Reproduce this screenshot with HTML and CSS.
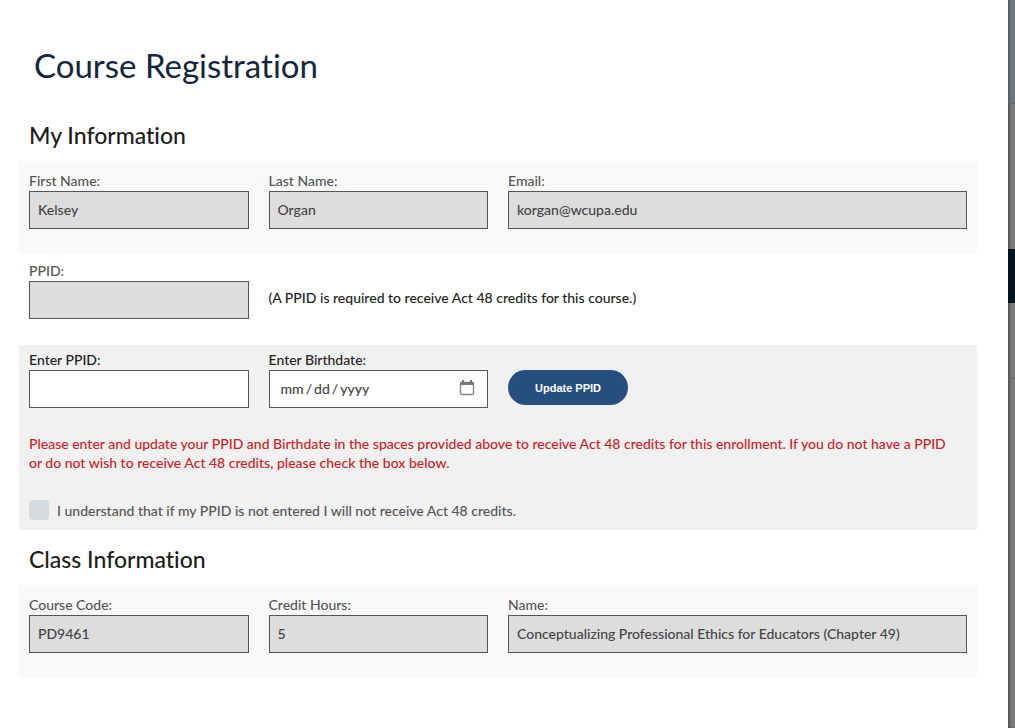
FILE: index.html
```html
<!DOCTYPE html>
<html lang="en">
<head>
    <meta charset="UTF-8">
    <meta name="viewport" content="width=device-width, initial-scale=1.0">
    <title>Course Registration</title>
    <link rel="stylesheet" href="styles.css">
</head>
<body>
    <main class="dialog">
        <h1>Course Registration</h1>
        <form id="registrationForm">
            <h2>My Information</h2>
            <div class="section shaded">
                <div class="field">
                    <label for="firstName">First Name:</label>
                    <input type="text" id="firstName" value="Kelsey" readonly>
                </div>
                <div class="field">
                    <label for="lastName">Last Name:</label>
                    <input type="text" id="lastName" value="Organ" readonly>
                </div>
                <div class="field wide">
                    <label for="email">Email:</label>
                    <input type="email" id="email" value="korgan@wcupa.edu" readonly>
                </div>
            </div>

            <div class="section plain">
                <div class="field">
                    <label for="ppid">PPID:</label>
                    <input type="text" id="ppid" readonly>
                </div>
                <p class="note">(A PPID is required to receive Act 48 credits for this course.)</p>
            </div>

            <div class="section update">
                <div class="field">
                    <label for="newPpid">Enter PPID:</label>
                    <input type="text" id="newPpid">
                </div>
                <div class="field">
                    <label for="birthdate">Enter Birthdate:</label>
                    <input type="date" id="birthdate">
                </div>
                <button type="button">Update PPID</button>
                <p class="warning">Please enter and update your PPID and Birthdate in the spaces provided above to receive Act 48 credits for this enrollment. If you do not have a PPID or do not wish to receive Act 48 credits, please check the box below.</p>
                <div class="agree">
                    <input type="checkbox" id="agree">
                    <label for="agree">I understand that if my PPID is not entered I will not receive Act 48 credits.</label>
                </div>
            </div>

            <h2>Class Information</h2>
            <div class="section shaded">
                <div class="field">
                    <label for="courseCode">Course Code:</label>
                    <input type="text" id="courseCode" value="PD9461" readonly>
                </div>
                <div class="field">
                    <label for="creditHours">Credit Hours:</label>
                    <input type="text" id="creditHours" value="5" readonly>
                </div>
                <div class="field wide">
                    <label for="courseName">Name:</label>
                    <input type="text" id="courseName" value="Conceptualizing Professional Ethics for Educators (Chapter 49)" readonly>
                </div>
            </div>
        </form>
    </main>
    <!-- dimmed page behind the dialog -->
    <div class="backdrop">
        <div class="backdrop-header"></div>
        <div class="backdrop-body"></div>
        <div class="backdrop-nav"></div>
        <div class="backdrop-body short"></div>
        <div class="backdrop-rest"></div>
    </div>
</body>
</html>
```
FILE: styles.css
```css
* {
    box-sizing: border-box;
}
body {
    display: flex;
    min-height: 100vh;
    margin: 0;
    background-color: #fff;
    color: #222;
    font-family: "Proxima Nova", Lato, sans-serif;
    font-size: 14px;
    font-weight: 500;
    font-variant-ligatures: none;
    line-height: 19px;
}
.dialog {
    flex: 1;
    padding: 45px 31px 40px 19px;
}
h1 {
    margin: 0 15px 35px;
    color: #14263b;
    font-size: 33px;
    font-weight: 400;
    line-height: 40px;
}
h2 {
    margin: 0;
    padding: 0 10px 11px;
    color: #1c1c1c;
    font-size: 23px;
    font-weight: 500;
    line-height: 30px;
}
.section {
    display: grid;
    grid-template-columns: repeat(4, 1fr);
    column-gap: 20px;
    padding: 10px 10px 25px;
}
.shaded {
    background-color: #f9f9f9;
}
.plain {
    padding-top: 7px;
    padding-bottom: 26px;
}
.update {
    margin-bottom: 14px;
    padding-top: 5px;
    padding-bottom: 10px;
    background-color: #f1f1f1;
}
.wide {
    grid-column: span 2;
}
label {
    color: #555;
}
.field label {
    display: block;
    line-height: 20px;
}
.update .field label {
    color: #222;
}
input[type="text"],
input[type="email"],
input[type="date"] {
    display: block;
    width: 100%;
    height: 38px;
    padding: 0 8px 2px;
    border: 1px solid #555;
    border-radius: 0;
    background-color: #fff;
    color: #444;
    font: inherit;
}
input[readonly] {
    background-color: #ddd;
}
input[type="date"] {
    padding: 0 12px 2px 10px;
}
input::-webkit-datetime-edit-text {
    padding: 0 1px;
}
input::-webkit-calendar-picker-indicator {
    width: 16px;
    height: 16px;
    padding: 0;
    background: url("data:image/svg+xml,%3Csvg xmlns='http://www.w3.org/2000/svg' viewBox='0 0 16 16'%3E%3Crect x='1.5' y='2.5' width='13' height='12' rx='1.5' fill='none' stroke='%23888' stroke-width='1.4'/%3E%3Cpath d='M1 2h14v3H1zM3 0h2v3H3zM11 0h2v3h-2z' fill='%23777'/%3E%3C/svg%3E") no-repeat center / 16px 16px;
}
.note {
    grid-column: span 3;
    align-self: center;
    margin: 0;
    padding-top: 14px;
}
button {
    justify-self: start;
    align-self: end;
    height: 35px;
    margin-bottom: 3px;
    padding: 0 27px;
    border: none;
    border-radius: 18px;
    background-color: #264f80;
    color: #fff;
    cursor: pointer;
    font-family: "Liberation Sans", Arial, sans-serif;
    font-size: 11px;
    font-weight: bold;
}
button:hover {
    background-color: #1c3d64;
}
.warning {
    grid-column: 1 / -1;
    margin: 26px 0 28px;
    padding-right: 10px;
    color: #cc2229;
}
.agree {
    display: flex;
    grid-column: 1 / -1;
    align-items: center;
    gap: 8px;
}
.agree input {
    width: 20px;
    height: 20px;
    margin: 0;
    border-radius: 4px;
    background-color: #d5dbde;
    appearance: none;
}
.agree input:checked {
    background-color: #264f80;
}
.backdrop {
    display: flex;
    flex-direction: column;
    width: 7px;
    background-color: #7b7b7b;
    box-shadow: inset 2px 0 2px #555;
}
.backdrop-header {
    height: 104px;
    border-bottom: 1px solid #666;
    background: linear-gradient(to right, #4d555a, #6c777e 3px);
}
.backdrop-body {
    height: 145px;
}
.backdrop-nav {
    height: 54px;
    background-color: #06141f;
}
.short {
    height: 76px;
    border-bottom: 1px solid #666;
}
.backdrop-rest {
    flex: 1;
}
```
